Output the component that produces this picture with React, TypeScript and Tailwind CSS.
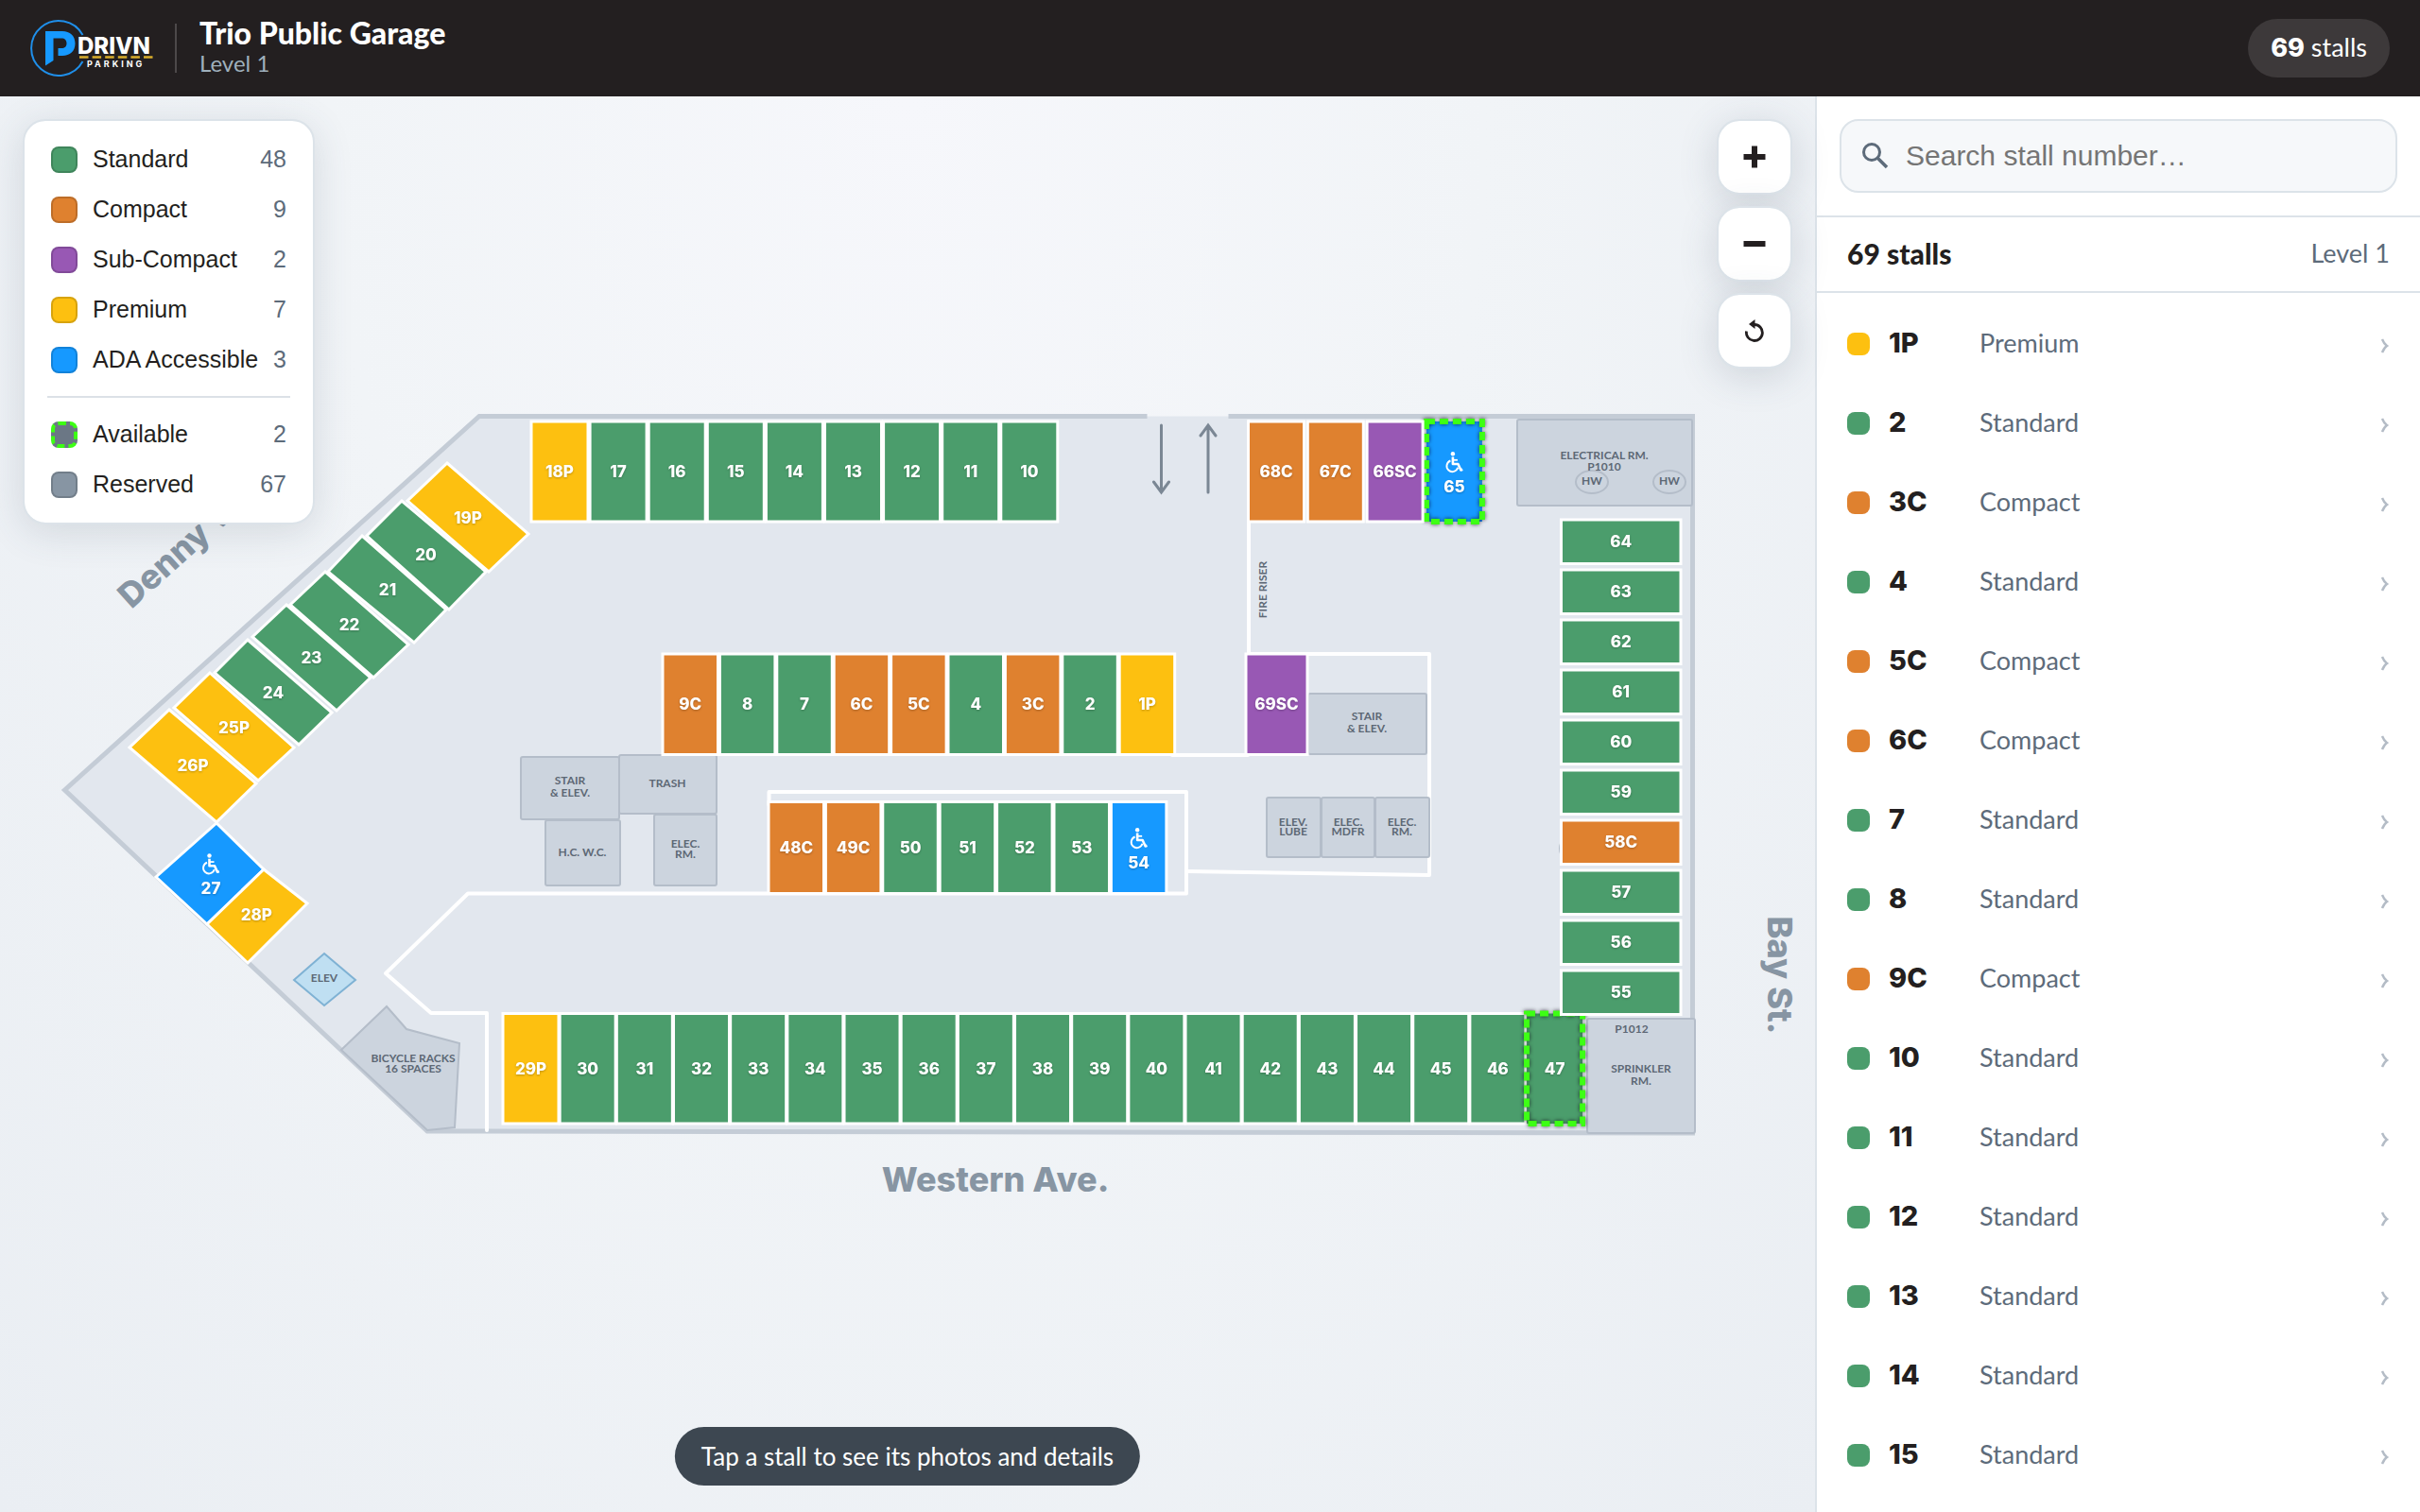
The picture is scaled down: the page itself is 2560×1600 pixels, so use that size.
import { useState } from "react";

type StallType = "standard" | "compact" | "subCompact" | "premium" | "ada";
type Point = [number, number];

interface Stall {
  id: string;
  num: number;
  type: StallType;
  points: Point[];
  available: boolean;
}

interface Row {
  ids: string[];
  x: number;
  y: number;
  w: number;
  h: number;
  dx: number;
  dy: number;
}

interface Room {
  x: number;
  y: number;
  w: number;
  h: number;
}

interface Note {
  x: number;
  y: number;
  text: string;
}

const TYPES: Record<StallType, { label: string; dot: string; fill: string }> = {
  standard: { label: "Standard", dot: "bg-[#4b9d6c]", fill: "fill-[#4b9d6c]" },
  compact: { label: "Compact", dot: "bg-[#df812f]", fill: "fill-[#df812f]" },
  subCompact: { label: "Sub-Compact", dot: "bg-[#9858b4]", fill: "fill-[#9858b4]" },
  premium: { label: "Premium", dot: "bg-[#fdc010]", fill: "fill-[#fdc010]" },
  ada: { label: "ADA Accessible", dot: "bg-[#1699ff]", fill: "fill-[#1699ff]" },
};

const TYPE_ORDER: StallType[] = ["standard", "compact", "subCompact", "premium", "ada"];

const ADA_STALLS = ["27", "54", "65"];
const AVAILABLE_STALLS = ["47", "65"];
const LIST_PAGE_SIZE = 15;

const range = (from: number, to: number) =>
  Array.from({ length: to - from + 1 }, (_, i) => String(from + i));

const ROWS: Row[] = [
  { ids: ["18P", "17", "16", "15", "14", "13", "12", "11", "10"], x: 562, y: 446, w: 60, h: 106, dx: 62.1, dy: 0 },
  { ids: ["68C", "67C", "66SC", "65"], x: 1320.5, y: 446, w: 59, h: 106, dx: 62.8, dy: 0 },
  { ids: ["9C", "8", "7", "6C", "5C", "4", "3C", "2", "1P"], x: 701, y: 692, w: 58.5, h: 106.5, dx: 60.4, dy: 0 },
  { ids: ["69SC"], x: 1318, y: 692, w: 65, h: 106.5, dx: 0, dy: 0 },
  { ids: ["48C", "49C", "50", "51", "52", "53", "54"], x: 813, y: 848.5, w: 58.5, h: 97, dx: 60.4, dy: 0 },
  { ids: ["29P", ...range(30, 47)], x: 532, y: 1072.5, w: 59, h: 116.5, dx: 60.17, dy: 0 },
  { ids: ["64", "63", "62", "61", "60", "59", "58C", "57", "56", "55"], x: 1651.5, y: 550, w: 126.5, h: 46.5, dx: 0, dy: 53 },
];

// Angled stalls along Denny Way: top, right, bottom, left corner
const ANGLED: Record<string, Point[]> = {
  "19P": [[473, 490], [559, 565], [517, 605], [431, 530]],
  "20": [[425, 530], [514, 605], [475, 645], [388, 567]],
  "21": [[383, 567], [472, 645], [438, 680], [347, 605]],
  "22": [[344, 605], [432, 682], [395, 717], [307, 640]],
  "23": [[303, 640], [392, 717], [356, 752], [267, 674]],
  "24": [[262, 677], [351, 754], [316, 788], [227, 712]],
  "25P": [[222, 712], [311, 791], [273, 826], [184, 749]],
  "26P": [[179, 751], [271, 829], [229, 870], [137, 791]],
  "27": [[229, 871], [279, 920], [219, 978], [165, 928]],
  "28P": [[279, 920], [325, 956], [262, 1019], [219, 978]],
};

function stallType(id: string): StallType {
  if (ADA_STALLS.includes(id)) return "ada";
  if (id.endsWith("SC")) return "subCompact";
  if (id.endsWith("C")) return "compact";
  if (id.endsWith("P")) return "premium";
  return "standard";
}

function makeStall(id: string, points: Point[]): Stall {
  return { id, num: parseInt(id, 10), type: stallType(id), points, available: AVAILABLE_STALLS.includes(id) };
}

const STALLS: Stall[] = [
  ...ROWS.flatMap((row) =>
    row.ids.map((id, i) => {
      const x = row.x + row.dx * i;
      const y = row.y + row.dy * i;
      return makeStall(id, [[x, y], [x + row.w, y], [x + row.w, y + row.h], [x, y + row.h]]);
    })
  ),
  ...Object.entries(ANGLED).map(([id, points]) => makeStall(id, points)),
].sort((a, b) => a.num - b.num);

const ROOMS: Room[] = [
  { x: 551, y: 801, w: 104, h: 66 },
  { x: 655, y: 799, w: 103, h: 62 },
  { x: 577, y: 868, w: 79, h: 69 },
  { x: 692, y: 862, w: 66, h: 75 },
  { x: 1605, y: 444, w: 185, h: 91 },
  { x: 1384, y: 734, w: 125, h: 64 },
  { x: 1340, y: 844, w: 57, h: 63 },
  { x: 1398, y: 844, w: 56, h: 63 },
  { x: 1455, y: 844, w: 57, h: 63 },
  { x: 1679, y: 1078, w: 114, h: 121 },
];

const NOTES: Note[] = [
  { x: 603, y: 826, text: "STAIR" },
  { x: 603, y: 839, text: "& ELEV." },
  { x: 706, y: 829, text: "TRASH" },
  { x: 616, y: 902, text: "H.C. W.C." },
  { x: 725, y: 893, text: "ELEC." },
  { x: 725, y: 904, text: "RM." },
  { x: 1697, y: 482, text: "ELECTRICAL RM." },
  { x: 1697, y: 494, text: "P1010" },
  { x: 1684, y: 509, text: "HW" },
  { x: 1766, y: 509, text: "HW" },
  { x: 1446, y: 758, text: "STAIR" },
  { x: 1446, y: 771, text: "& ELEV." },
  { x: 1368, y: 870, text: "ELEV." },
  { x: 1368, y: 880, text: "LUBE" },
  { x: 1426, y: 870, text: "ELEC." },
  { x: 1426, y: 880, text: "MDFR" },
  { x: 1483, y: 870, text: "ELEC." },
  { x: 1483, y: 880, text: "RM." },
  { x: 1726, y: 1089, text: "P1012" },
  { x: 1736, y: 1131, text: "SPRINKLER" },
  { x: 1736, y: 1144, text: "RM." },
  { x: 437, y: 1120, text: "BICYCLE RACKS" },
  { x: 437, y: 1131, text: "16 SPACES" },
  { x: 343, y: 1035, text: "ELEV" },
];

const toPoints = (points: Point[]) => points.map((p) => p.join(",")).join(" ");

function Logo() {
  return (
    <svg viewBox="0 0 132 62" className="h-[62px] w-[132px]" role="img" aria-label="DRIVN Parking">
      <path d="M55.500 17 A29 29 0 1 0 55.500 45" fill="none" stroke="#1f8fea" strokeWidth="2" />
      <path
        d="M16 13 H34 C42 13 47.500 18 47.500 26 C47.500 34 42 39 34 39 H29.500 V31 H33 C36.500 31 38.500 29 38.500 26 C38.500 22.500 36.500 20.500 33 20.500 H24.500 V44 L16 49.500 Z"
        fill="#1699ff"
      />
      <text x="50" y="37" fill="#fff" className="font-[Inter,sans-serif] text-[24px] font-extrabold">DRIVN</text>
      <path d="M52 40.500 H130" stroke="#d9ad2b" strokeWidth="2.400" strokeDasharray="9.500 4.100" />
      <text x="60" y="51" fill="#fff" className="font-[Inter,sans-serif] text-[9px] font-bold tracking-[3px]">PARKING</text>
    </svg>
  );
}

function WheelchairIcon({ x, y }: { x: number; y: number }) {
  return (
    <g transform={`translate(${x - 10} ${y - 11})`} fill="none" stroke="#fff">
      <circle cx="8.500" cy="2.300" r="2.200" fill="#fff" stroke="none" />
      <path d="M8.500 5.500 V13 H14 L17 19.500 L18.800 18.700" strokeWidth="2.600" strokeLinejoin="round" />
      <path d="M9 8.800 H13.500" strokeWidth="1.800" />
      <path d="M6 9.500 A6 6 0 1 0 13.800 16.800" strokeWidth="1.900" />
    </g>
  );
}

function StallShape({ stall }: { stall: Stall }) {
  const cx = stall.points.reduce((sum, p) => sum + p[0], 0) / stall.points.length;
  const cy = stall.points.reduce((sum, p) => sum + p[1], 0) / stall.points.length;
  const isAda = stall.type === "ada";

  return (
    <a href={`#stall-${stall.id}`} aria-label={`Stall ${stall.id}`}>
      <polygon
        points={toPoints(stall.points)}
        className={TYPES[stall.type].fill}
        stroke={stall.available ? "none" : "#fff"}
        strokeWidth="3"
      />
      {stall.available && (
        <polygon
          points={toPoints(stall.points)}
          fill="none"
          stroke="#3dff14"
          strokeWidth="6"
          strokeDasharray="9 5"
          className="drop-shadow-[0_0_2px_rgba(0,0,0,0.7)]"
        />
      )}
      {isAda && <WheelchairIcon x={cx} y={cy - 10} />}
      <text
        x={cx}
        y={(isAda ? cy + 16 : cy) + 6}
        textAnchor="middle"
        fill="#fff"
        className="font-[Inter,sans-serif] text-[17px] font-extrabold drop-shadow-[0_1px_1px_rgba(0,0,0,0.25)]"
      >
        {stall.id}
      </text>
    </a>
  );
}

function GarageMap() {
  return (
    <svg viewBox="0 102 1920 1498" className="h-full w-full" aria-label="Level 1 floor plan">
      <polygon points="68.500,836 507,440.500 1790.500,440.500 1790.500,1199 452,1197" fill="#e2e7ee" />
      <polyline
        points="1299.500,440.500 1790.500,440.500 1790.500,1199 452,1197 68.500,836 507,440.500 1213.500,440.500"
        fill="none"
        stroke="#c4ccd6"
        strokeWidth="5"
      />

      {/* Drive aisle lines */}
      <g fill="none" stroke="#fff" strokeWidth="4" strokeLinejoin="round" strokeLinecap="round">
        <polyline points="515,1196 515,1072 456,1072 408,1030 495,945.500 1255,945.500 1255,838 813.500,838 813.500,852" />
        <polyline points="1255,922 1512,926 1512,692 1321,692 1321,446" />
        <line x1="1240" y1="799" x2="1320" y2="799" />
      </g>

      {/* Entry and exit arrows */}
      <g fill="none" stroke="#7b8794" strokeWidth="3" strokeLinecap="round">
        <path d="M1228.500 450 V520 M1220.500 510 L1228.500 521 L1236.500 510" />
        <path d="M1278 521 V451 M1270 461 L1278 450 L1286 461" />
      </g>

      {/* Rooms */}
      <g fill="#ccd4de" stroke="#b4bdc9" strokeWidth="2">
        {ROOMS.map((room) => (
          <rect key={`${room.x}-${room.y}`} x={room.x} y={room.y} width={room.w} height={room.h} rx="2" />
        ))}
        <polygon points="361,1111 409,1065 430,1089 486,1104 481,1193 452,1196" />
        <ellipse cx="1684" cy="510" rx="17" ry="12" />
        <ellipse cx="1766" cy="510" rx="17" ry="12" />
        <circle cx="1666" cy="898" r="16" />
      </g>
      <polygon points="343,1009 376,1037 343,1064 311,1037" fill="#bfdff2" stroke="#7fb2d4" strokeWidth="2" />

      {STALLS.map((stall) => (
        <StallShape key={stall.id} stall={stall} />
      ))}

      <g fill="#5d6875" textAnchor="middle" className="text-[12px] font-bold">
        {NOTES.map((note) => (
          <text key={`${note.x}-${note.y}`} x={note.x} y={note.y + 4}>
            {note.text}
          </text>
        ))}
        <text transform="translate(1340 624) rotate(-90)">FIRE RISER</text>
      </g>

      <g fill="#8795a3" className="font-[Inter,sans-serif] text-[36px] font-extrabold">
        <text transform="translate(139 645) rotate(-42)">Denny Way</text>
        <text x="1053" y="1261" textAnchor="middle">Western Ave.</text>
        <text transform="translate(1870 1032) rotate(90)" textAnchor="middle">Bay St.</text>
      </g>
    </svg>
  );
}

function LegendRow({ swatch, label, count }: { swatch: string; label: string; count: number }) {
  return (
    <li className="flex h-[53px] items-center gap-4 px-1">
      <span className={`size-7 rounded-lg border-2 ${swatch}`} />
      <span className="flex-1 whitespace-nowrap text-[#231f20]">{label}</span>
      <span className="text-[#5d6b7a]">{count}</span>
    </li>
  );
}

function Legend() {
  const available = STALLS.filter((s) => s.available).length;

  return (
    <aside className="absolute top-6 left-6 w-[309px] rounded-3xl border-2 border-[#dce3e9] bg-white bg-clip-padding px-6 py-[14px] font-['Liberation_Sans',Arial,sans-serif] text-[25px] shadow-[0_8px_40px_rgba(60,80,100,0.16)]">
      <ul>
        {TYPE_ORDER.map((type) => (
          <LegendRow
            key={type}
            swatch={`border-black/15 ${TYPES[type].dot}`}
            label={TYPES[type].label}
            count={STALLS.filter((s) => s.type === type).length}
          />
        ))}
      </ul>
      <hr className="my-3 border-t-2 border-[#dce1e7]" />
      <ul>
        <LegendRow
          swatch="border-4 border-dashed border-[#3dff14] bg-[#6b7785]"
          label="Available"
          count={available}
        />
        <LegendRow swatch="border-black/15 bg-[#8795a3]" label="Reserved" count={STALLS.length - available} />
      </ul>
    </aside>
  );
}

function ZoomControls() {
  const button =
    "flex size-20 items-center justify-center rounded-3xl border-2 border-[#dce3e9] bg-white bg-clip-padding text-[#231f20] shadow-[0_8px_40px_rgba(60,80,100,0.18)]";

  return (
    <div className="absolute top-6 right-6 flex flex-col gap-3">
      <button type="button" aria-label="Zoom in" className={button}>
        <svg viewBox="0 0 24 24" className="size-6" stroke="currentColor" strokeWidth="6">
          <path d="M12 0.500 V23.500 M0.500 12 H23.500" />
        </svg>
      </button>
      <button type="button" aria-label="Zoom out" className={button}>
        <svg viewBox="0 0 24 24" className="size-6" stroke="currentColor" strokeWidth="6">
          <path d="M0.500 12 H23.500" />
        </svg>
      </button>
      <button type="button" aria-label="Reset view" className={button}>
        <svg viewBox="0 0 24 24" className="size-6" fill="none" stroke="currentColor" strokeWidth="2.800">
          <path d="M3.500 12.500 A8.500 8.500 0 1 0 12 5.500 H9.500" />
          <path d="M12.500 0 L6 5 L12.500 10 Z" fill="currentColor" stroke="none" />
        </svg>
      </button>
    </div>
  );
}

function StallList() {
  const [query, setQuery] = useState("");
  const matches = STALLS.filter((s) => s.id.toLowerCase().startsWith(query.trim().toLowerCase()));

  return (
    <section className="flex w-1/4 flex-col border-l-2 border-[#dce3e9] bg-white">
      <div className="border-b-2 border-[#dce3e9] p-6">
        <label className="flex h-[78px] items-center gap-[18px] rounded-[20px] border-2 border-[#dce3e9] bg-[#f6f8fa] px-[22px]">
          <svg viewBox="0 0 28 28" className="size-7 shrink-0" fill="none" stroke="#5d6b7a" strokeWidth="3">
            <circle cx="10" cy="10" r="8.500" />
            <path d="M16 16 L26 26" strokeWidth="3.500" />
          </svg>
          <input
            type="text"
            aria-label="Search stall number"
            placeholder="Search stall number…"
            value={query}
            onChange={(e) => setQuery(e.target.value)}
            className="min-w-0 flex-1 bg-transparent pb-0.5 font-['Liberation_Sans',Arial,sans-serif] text-[30px] text-[#231f20] outline-none placeholder:text-[#757575]"
          />
        </label>
      </div>

      <div className="flex h-20 items-center justify-between border-b-2 border-[#dce3e9] px-8 pb-0.5">
        <h2 className="text-[30px] font-black text-[#231f20]">{matches.length} stalls</h2>
        <span className="text-[27px] text-[#5d6b7a]">Level 1</span>
      </div>

      <ul className="min-h-0 flex-1 overflow-y-auto py-3 [scrollbar-width:none]">
        {matches.slice(0, LIST_PAGE_SIZE).map((stall) => (
          <li key={stall.id}>
            <button type="button" className="flex h-[84px] w-full items-center px-8 text-left">
              <span className={`size-6 rounded-lg ${TYPES[stall.type].dot}`} />
              <span className="ml-5 w-24 pb-0.5 font-[Inter,sans-serif] text-[29px] font-extrabold text-[#231f20]">
                {stall.id}
              </span>
              <span className="flex-1 pb-0.5 text-[27px] text-[#5d6b7a]">{TYPES[stall.type].label}</span>
              <svg viewBox="0 0 10 16" className="mt-1 h-4 w-[10px]" fill="none" stroke="#b4bcc6" strokeWidth="2.500">
                <path d="M2 1 Q4 6 7 8 Q4 10 2 15" />
              </svg>
            </button>
          </li>
        ))}
      </ul>
    </section>
  );
}

export default function App() {
  return (
    <div className="flex h-screen flex-col overflow-hidden font-[Lato,'Open_Sans',sans-serif]">
      <header className="flex h-[102px] shrink-0 items-center bg-[#231f20] px-8 text-white">
        <Logo />
        <div className="ml-[21px] h-[52px] w-0.5 bg-[#4d494a]" />
        <div className="ml-6 pb-1">
          <h1 className="text-[32px] leading-9 font-black">Trio Public Garage</h1>
          <p className="text-[24px] leading-7 text-[#9fb0bc]">Level 1</p>
        </div>
        <div className="ml-auto flex h-[62px] items-center rounded-full bg-[#3d393a] px-6 text-[27px]">
          <span>
            <strong className="font-[Inter,sans-serif] font-extrabold">{STALLS.length}</strong> stalls
          </span>
        </div>
      </header>

      <div className="flex min-h-0 flex-1">
        <main className="relative min-w-0 flex-1 bg-[radial-gradient(ellipse_at_50%_0%,#f6f7fb_0%,#f1f4f7_45%,#eaeef3_100%)]">
          <GarageMap />
          <Legend />
          <ZoomControls />
          <p className="absolute bottom-7 left-1/2 flex h-[62px] -translate-x-1/2 items-center rounded-full bg-[#3d4751] px-7 text-[26px] whitespace-nowrap text-white">
            Tap a stall to see its photos and details
          </p>
        </main>
        <StallList />
      </div>
    </div>
  );
}
